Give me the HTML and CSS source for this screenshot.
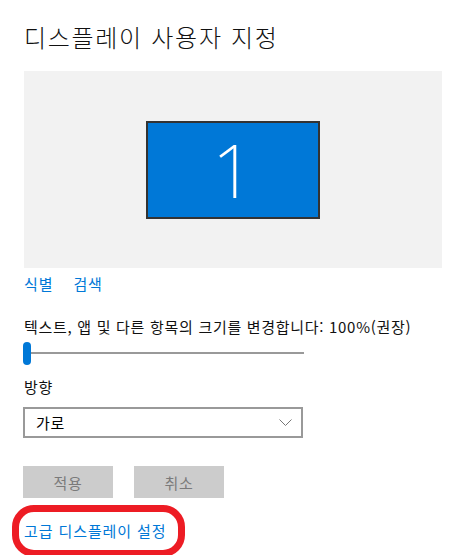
FILE: index.html
```html
<!DOCTYPE html>
<html lang="ko">
<head>
  <meta charset="UTF-8">
  <meta name="viewport" content="width=device-width, initial-scale=1.0">
  <title>디스플레이 사용자 지정</title>
  <link rel="stylesheet" href="styles.css">
</head>
<body>
  <div class="page">
    <h1 class="title">디스플레이 사용자 지정</h1>

    <div class="preview">
      <div class="monitor">1</div>
    </div>

    <div class="links">
      <a href="#" class="link">식별</a>
      <a href="#" class="link">검색</a>
    </div>

    <div class="label">텍스트, 앱 및 다른 항목의 크기를 변경합니다: 100%(권장)</div>
    <div class="slider">
      <div class="thumb"></div>
      <div class="track"></div>
    </div>

    <div class="label label-small">방향</div>
    <div class="select">
      <span>가로</span>
      <svg class="chevron" width="13" height="8" viewBox="0 0 13 8">
        <polyline points="0.5,0.5 6.5,6.5 12.5,0.5" fill="none" stroke="#777" stroke-width="1"/>
      </svg>
    </div>

    <div class="buttons">
      <button class="btn" disabled>적용</button>
      <button class="btn" disabled>취소</button>
    </div>

    <div class="highlight">
      <a href="#" class="link">고급 디스플레이 설정</a>
    </div>
  </div>
</body>
</html>
```

FILE: styles.css
```css
body {
  margin: 0;
  background: white;
  color: black;
  font-family: "Noto Sans CJK KR", "Noto Sans", sans-serif;
  overflow: hidden;
}

.page {
  padding: 20px 0 0 24px;
}

.title {
  margin: 0;
  font-size: 24px;
  font-weight: 300;
  line-height: 34px;
  letter-spacing: 1.7px;
  color: #111;
}

.preview {
  margin-top: 17px;
  width: 418px;
  height: 197px;
  background: #f2f2f2;
  display: flex;
  align-items: center;
  justify-content: center;
}

.monitor {
  width: 170px;
  height: 94px;
  background: #0078d7;
  border: 2px solid #333;
  color: white;
  font-size: 74px;
  font-weight: 200;
  line-height: 94px;
  text-align: center;
  font-family: "Noto Sans", sans-serif;
}

.links {
  display: flex;
  gap: 20px;
  margin-top: 3px;
  height: 24px;
  align-items: center;
}

.link {
  color: #0078d7;
  text-decoration: none;
  font-size: 15px;
  letter-spacing: 0.9px;
}

.label {
  margin-top: 22px;
  font-size: 15px;
  line-height: 20px;
  letter-spacing: 0.7px;
  color: #111;
}

.label-small {
  margin-top: 12px;
}

.slider {
  display: flex;
  align-items: center;
  margin-top: 4px;
  width: 280px;
  height: 24px;
}

.thumb {
  width: 8px;
  height: 23px;
  margin-left: -1px;
  border-radius: 4px;
  background: #0078d7;
}

.track {
  flex: 1;
  height: 2px;
  background: #999;
}

.select {
  box-sizing: border-box;
  width: 280px;
  height: 31px;
  margin-top: 10px;
  margin-left: -1px;
  border: 2px solid #999;
  display: flex;
  align-items: center;
  justify-content: space-between;
  padding: 0 9px 0 11px;
  font-size: 15px;
  letter-spacing: 0.6px;
}

.buttons {
  display: flex;
  gap: 21px;
  margin-top: 28px;
  margin-left: -1px;
}

.btn {
  width: 90px;
  height: 32px;
  border: none;
  background: #cccccc;
  color: #7a7a7a;
  font-family: inherit;
  font-size: 15px;
  letter-spacing: 0.6px;
  padding: 0;
}

.highlight {
  display: inline-block;
  margin-top: 7px;
  margin-left: -12px;
  padding: 6px 11px 8px 5px;
  border: 7px solid #ed1c24;
  border-radius: 22px;
}
```
